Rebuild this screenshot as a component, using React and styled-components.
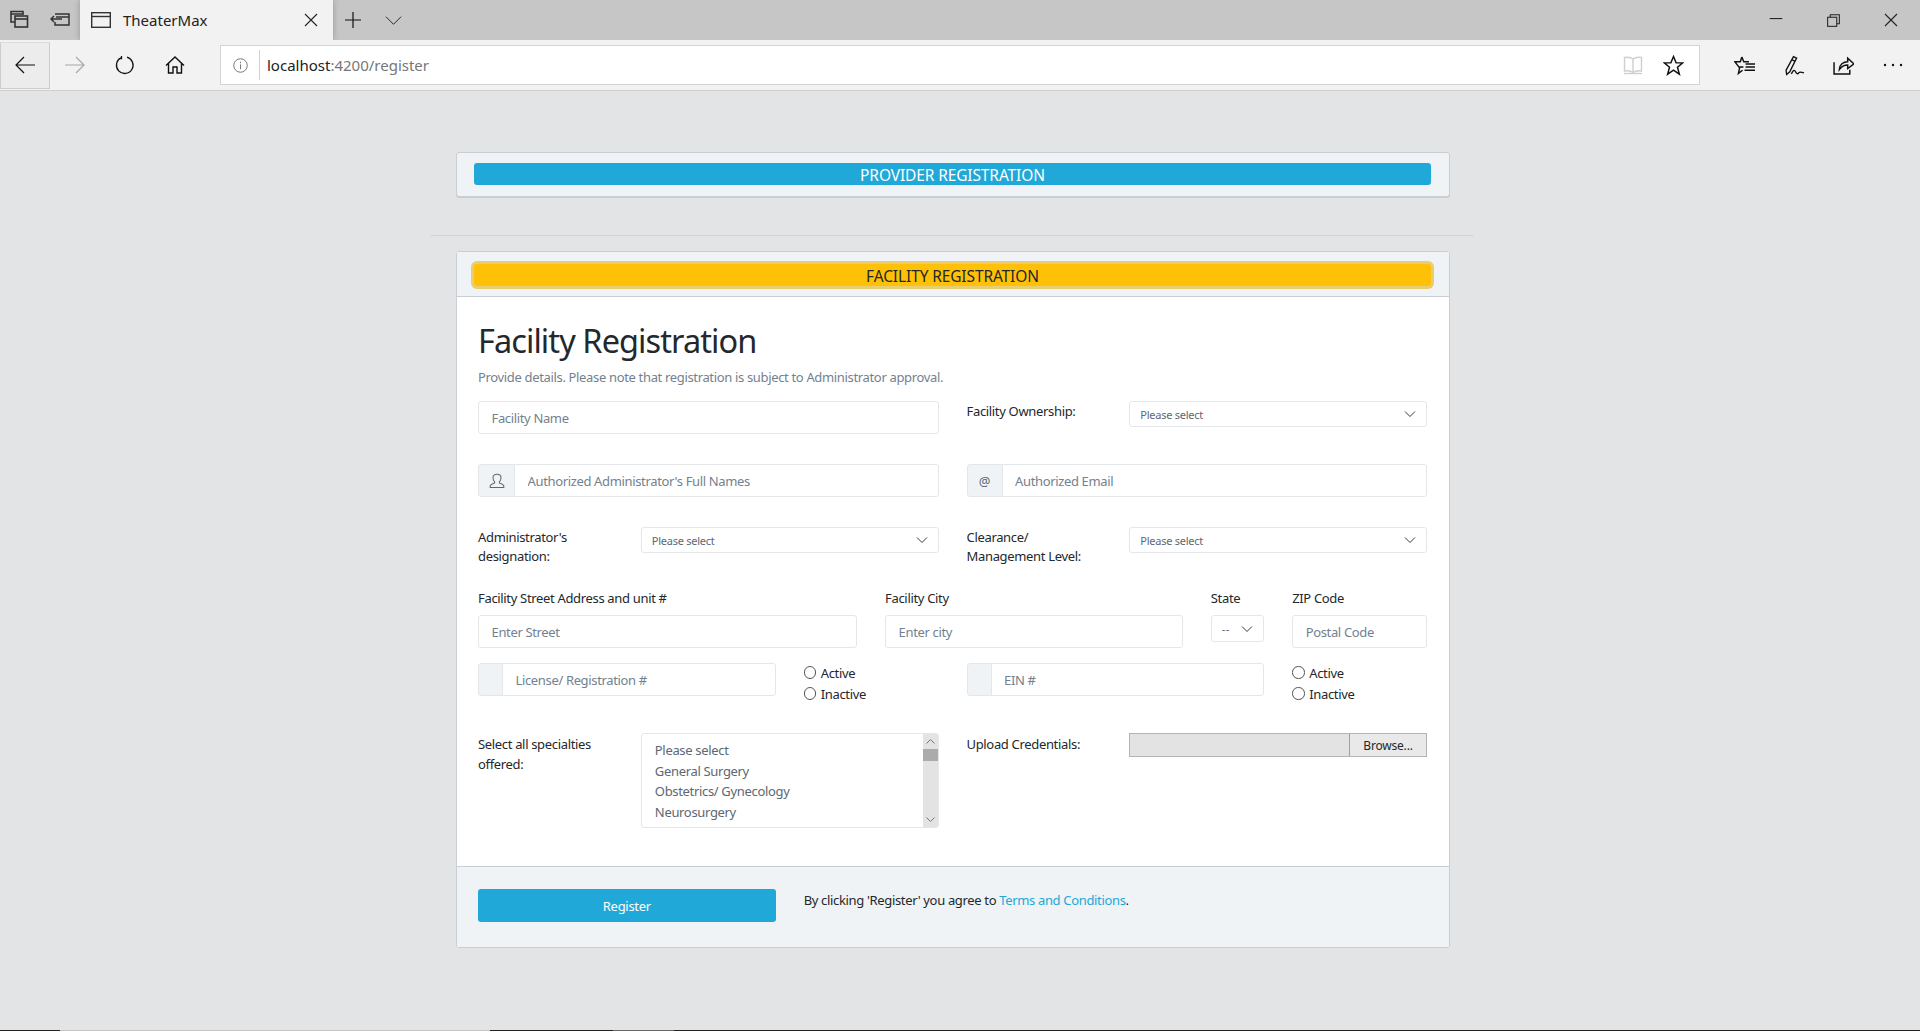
import styled, { createGlobalStyle } from "styled-components";

const FONT = '"Noto Sans", "Open Sans", sans-serif';
const CHEVRON =
  "url(\"data:image/svg+xml,%3Csvg xmlns='http://www.w3.org/2000/svg' width='12' height='8' viewBox='0 0 12 8'%3E%3Cpath d='M1 1.5l5 5 5-5' fill='none' stroke='%23343a40' stroke-width='1'/%3E%3C/svg%3E\")";

const GlobalStyle = createGlobalStyle`
  html, body {
    margin: 0;
    padding: 0;
    background: #e3e4e6;
  }
  * {
    box-sizing: border-box;
  }
  #root {
    height: 1031px;
    overflow: hidden;
  }
`;

const Page = styled.div`
  height: 1031px;
  display: flex;
  flex-direction: column;
  font-family: ${FONT};
  font-size: 13px;
  color: #23282c;
`;

/* browser chrome */
const TabStrip = styled.div`
  height: 40px;
  flex: none;
  display: flex;
  align-items: center;
  background: #c6c6c6;
  color: #111;
`;

const StripButton = styled.div`
  width: 40px;
  height: 40px;
  flex: none;
  display: flex;
  align-items: center;
  justify-content: center;
`;

const Tab = styled.div`
  width: 253px;
  height: 40px;
  flex: none;
  display: flex;
  align-items: center;
  background: #f2f2f2;
  padding-left: 11px;
  box-shadow: 0 0 6px rgba(0, 0, 0, 0.25);
`;

const TabTitle = styled.span`
  flex: 1;
  margin-left: 12px;
  font-size: 15px;
  color: #222;
`;

const TabClose = styled.div`
  width: 44px;
  display: flex;
  justify-content: center;
`;

const Spacer = styled.div`
  flex: 1;
`;

const WindowButton = styled(StripButton)`
  width: 57.5px;
`;

const NavBar = styled.div`
  height: 51px;
  flex: none;
  display: flex;
  align-items: center;
  background: #f2f2f2;
  border-bottom: 1px solid #cfcfcf;
`;

const NavButton = styled.div`
  width: 50px;
  height: 47px;
  flex: none;
  display: flex;
  align-items: center;
  justify-content: center;
  ${(p) =>
    p.$pressed &&
    "background: #ececec; border: 1px solid #cdcdcd; border-top-color: #dcdcdc;"}
`;

const HubButton = styled(NavButton)`
  width: 49.5px;
`;

const AddressBar = styled.div`
  width: 1480px;
  height: 40px;
  flex: none;
  margin: 0 20px;
  padding-right: 5px;
  display: flex;
  align-items: center;
  background: #fff;
  border: 1px solid #d4d4d4;
`;

const InfoSlot = styled.div`
  width: 39px;
  height: 30px;
  flex: none;
  display: flex;
  align-items: center;
  justify-content: center;
  border-right: 1px solid #d0d0d0;
`;

const Url = styled.div`
  flex: 1;
  padding-left: 7px;
  font-size: 15px;
  color: #777;

  b {
    font-weight: 400;
    color: #222;
  }
`;

const AddressIcon = styled.div`
  width: 41px;
  display: flex;
  justify-content: center;
`;

/* page content */
const Main = styled.main`
  flex: 1;
  width: 1042px;
  margin-left: 431px;
  padding: 61px 25px 0;
`;

const Card = styled.section`
  width: 994px;
  background: #fff;
  border: 1px solid #c8ced3;
  border-radius: 3px;
`;

const TopCard = styled(Card)`
  height: 45px;
  background: #f0f3f5;
  padding: 10px 18px 10px 17px;
  box-shadow: 0 1px 0 #c8ced3;
`;

const Divider = styled.hr`
  margin: 38px -25px 15px;
  border: 0;
  border-top: 1px solid #cfd2d6;
`;

const CardHeader = styled.header`
  height: 45px;
  padding: 12px 18px 0 17px;
  background: #f0f3f5;
  border-bottom: 1px solid #c8ced3;
`;

const Banner = styled.button`
  display: block;
  width: 100%;
  height: 22px;
  padding: ${(p) => (p.$active ? "1px 0 0" : "2px 0 0")};
  border: 0;
  border-radius: 3px;
  font-family: ${FONT};
  font-size: 15.5px;
  line-height: 20px;
  letter-spacing: -0.12px;
  text-align: center;
  color: ${(p) => (p.$active ? "#23282c" : "#fff")};
  background: ${(p) => (p.$active ? "#ffc107" : "#20a8d8")};
  box-shadow: ${(p) => (p.$active ? "0 0 0 3px #eacd70" : "none")};
`;

const CardBody = styled.div`
  padding: 23px 22px 38px 21px;
`;

const Title = styled.h1`
  margin: 0;
  font-size: 32.5px;
  line-height: 42px;
  font-weight: 400;
  letter-spacing: -0.92px;
  color: #23282c;
`;

const Lead = styled.p`
  margin: 6px 0 14px;
  line-height: 19px;
  font-size: 13px;
  letter-spacing: -0.34px;
  color: #73818f;
`;

const Row = styled.div`
  display: grid;
  grid-template-columns: repeat(12, 1fr);
  column-gap: 28px;
  margin-bottom: ${(p) => p.$gap ?? 30}px;
`;

const Col = styled.div`
  grid-column: span ${(p) => p.$span};
  min-width: 0;
`;

const Label = styled.label`
  display: block;
  font-size: 13px;
  line-height: 19px;
  letter-spacing: -0.33px;
  color: #23282c;
`;

const TopLabel = styled(Label)`
  margin-bottom: 7px;
`;

const RowLabel = styled(Label)`
  padding-top: 1px;
`;

const TallLabel = styled(RowLabel)`
  line-height: 20px;
`;

const Input = styled.input`
  display: block;
  width: 100%;
  height: 33px;
  padding: 0 12.5px;
  background: #fff;
  border: 1px solid #e4e7ea;
  border-radius: 3px;
  font-family: ${FONT};
  font-size: 13px;
  letter-spacing: -0.35px;
  outline: none;

  &::placeholder {
    color: #73818f;
    opacity: 1;
  }
`;

const Group = styled.div`
  display: flex;
  height: 33px;
`;

const Addon = styled.span`
  width: ${(p) => p.$w}px;
  flex: none;
  display: flex;
  align-items: center;
  justify-content: center;
  background: #f0f3f5;
  border: 1px solid #e4e7ea;
  border-radius: 3px 0 0 3px;
  font-size: 13px;
  color: #5c6873;
`;

const GroupInput = styled(Input)`
  flex: 1;
  min-width: 0;
  margin-left: -1px;
  border-radius: 0 3px 3px 0;
`;

const Select = styled.select`
  display: block;
  width: 100%;
  height: 26px;
  padding: 0 24px 0 10px;
  appearance: none;
  background: #fff ${CHEVRON} no-repeat right 10px center;
  border: 1px solid #e4e7ea;
  border-radius: 3px;
  font-family: ${FONT};
  font-size: 11px;
  letter-spacing: -0.25px;
  color: #5c6873;
  outline: none;
`;

const StateSelect = styled(Select)`
  height: 27px;
  letter-spacing: 0.5px;
`;

const RadioStack = styled.div`
  display: flex;
  flex-direction: column;
  gap: 2px;
`;

const RadioLabel = styled.label`
  display: flex;
  align-items: center;
  height: 19px;
  font-size: 13px;
  letter-spacing: -0.33px;
`;

const Radio = styled.input`
  appearance: none;
  width: 12.5px;
  height: 12.5px;
  margin: 0 4.5px 0 0;
  border: 1px solid #555;
  border-radius: 50%;
  background: #fff;
`;

const ListBox = styled.div`
  display: flex;
  height: 95px;
  background: #fff;
  border: 1px solid #e4e7ea;
  border-radius: 3px;
  overflow: hidden;
`;

const ListItems = styled.ul`
  flex: 1;
  margin: 0;
  padding: 6px 13px;
  list-style: none;
  font-size: 13px;
  line-height: 20.6px;
  letter-spacing: -0.33px;
  color: #5c6873;
`;

const ScrollBar = styled.div`
  position: relative;
  width: 15px;
  flex: none;
  display: flex;
  flex-direction: column;
  justify-content: space-between;
  align-items: center;
  padding: 5px 0;
  background: #e3e3e3;
`;

const ScrollThumb = styled.div`
  position: absolute;
  top: 15px;
  left: 0;
  right: 0;
  height: 12px;
  background: #ababab;
`;

const FileField = styled.div`
  display: flex;
  height: 24px;
  background: #e3e3e3;
  border: 1px solid #b4b4b4;
`;

const FileName = styled.div`
  flex: 1;
`;

const Browse = styled.button`
  width: 77px;
  flex: none;
  padding: 0;
  background: #e9e9e9;
  border: 0;
  border-left: 1px solid #a0a0a0;
  font-family: ${FONT};
  font-size: 12px;
  letter-spacing: -0.2px;
  color: #23282c;
`;

const CardFooter = styled.footer`
  height: 81px;
  padding: 22px 22px 0 21px;
  background: #f0f3f5;
  border-top: 1px solid #c8ced3;
  border-radius: 0 0 3px 3px;
`;

const RegisterButton = styled.button`
  display: block;
  width: 100%;
  height: 33px;
  padding: 0;
  border: 0;
  border-radius: 3px;
  background: #20a8d8;
  font-family: ${FONT};
  font-size: 13px;
  letter-spacing: -0.3px;
  color: #fff;
`;

const Agreement = styled.p`
  margin: 0;
  padding-top: 2px;
  line-height: 19px;
  font-size: 13px;
  letter-spacing: -0.34px;
  color: #23282c;

  a {
    color: #20a8d8;
    text-decoration: none;
  }
`;

const BottomStrip = styled.div`
  height: 1px;
  flex: none;
  display: flex;
  background: #222;
`;

const StripPiece = styled.div`
  width: ${(p) => p.$w}px;
  background: ${(p) => p.$color};
`;

/* icons */
const Glyph = ({ size = 20, color = "#111", width = 1.2, children }) => (
  <svg width={size} height={size} viewBox="0 0 20 20" fill="none" stroke={color} strokeWidth={width}>
    {children}
  </svg>
);

const TabsAsideIcon = () => (
  <Glyph width={1.6} color="#333">
    <path d="M1 6V1.5h12V5M1 4h12M1 6v6h4" />
    <rect x="5" y="6" width="12.5" height="11" />
    <path d="M5 9h12.5" />
  </Glyph>
);
const SetAsideIcon = () => (
  <Glyph width={1.5} color="#333">
    <path d="M5 4h14v11H5v-3M1 9h11M4 6L1 9l3 3" />
    <path d="M6 7h13" />
  </Glyph>
);
const PageIcon = () => (
  <Glyph color="#333" width={1.4}>
    <rect x="0.7" y="2.7" width="18.6" height="14.6" />
    <path d="M1 6.5h18" />
  </Glyph>
);
const CrossIcon = ({ size = 14 }) => (
  <svg width={size} height={size} viewBox="0 0 14 14" fill="none" stroke="#222" strokeWidth="1.1">
    <path d="M1 1l12 12M13 1L1 13" />
  </svg>
);
const PlusIcon = () => (
  <Glyph width={1.2}>
    <path d="M10 2v16M2 10h16" />
  </Glyph>
);
const DownIcon = () => (
  <Glyph size={19} width={1} color="#222">
    <path d="M2 6l8 8 8-8" />
  </Glyph>
);
const MinimizeIcon = () => (
  <Glyph size={14} width={1.4}>
    <path d="M1 8h18" />
  </Glyph>
);
const RestoreIcon = () => (
  <Glyph size={13} width={1.6} color="#222">
    <rect x="1" y="5" width="14" height="14" />
    <path d="M5 5V1h14v14h-4" />
  </Glyph>
);
const BackIcon = ({ color = "#111", flip }) => (
  <svg width="20" height="18" viewBox="0 0 20 18" fill="none" stroke={color} strokeWidth="1.2">
    <path d={flip ? "M0 9h19M11 1l8 8-8 8" : "M20 9H1M9 1L1 9l8 8"} />
  </svg>
);
const RefreshIcon = () => (
  <Glyph size={20} width={1.3}>
    <path d="M12 2.2A8.3 8.3 0 1 1 6 2.8M6.5 1v2.6H3.6" />
  </Glyph>
);
const HomeIcon = () => (
  <Glyph size={20} width={1.4}>
    <path d="M1 10.5L10 2l9 8.5M3.5 8.500V18h4.500v-6h4v6h4.500V8.500" />
  </Glyph>
);
const InfoIcon = () => (
  <Glyph size={15} color="#777" width={1.3}>
    <circle cx="10" cy="10" r="9" />
    <path d="M10 8.5v6.5M10 5v2" />
  </Glyph>
);
const BookIcon = () => (
  <Glyph color="#cfcfcf" width={1.4}>
    <path d="M10 4C8 2.5 4 2 1.5 2.5V16c3-.5 6.5 0 8.5 1.5M10 4c2-1.5 6-2 8.5-1.5V16c-3-.5-6.5 0-8.5 1.5M10 4v13.5" />
    <path d="M1 18.5h18" />
  </Glyph>
);
const StarIcon = () => (
  <Glyph size={21} width={1.4}>
    <path d="M10 1.5l2.5 6h6.3l-5 4.2 1.8 6.6-5.6-3.8-5.6 3.8 1.8-6.6-5-4.2h6.3z" />
  </Glyph>
);
const FavoritesIcon = () => (
  <Glyph size={21} width={1.4}>
    <path d="M7.5 2l1.8 4.5h5M9 11.5H4.7l-3.7-5h5L7.500 2M5.500 11.500l-1.300 6 4-3" />
    <path d="M11 8.500h9M11 11.500h9M10 14.500h10" />
  </Glyph>
);
const PenIcon = () => (
  <Glyph size={21} width={1.3}>
    <path d="M9 1.500l3 1.500-6.500 13-3 2.500-.500-4zM7.500 4.500l3 1.500" />
    <path d="M7 18c2-4 3-4 4-2s2 2.500 3 1 2-1 5 0" />
  </Glyph>
);
const ShareIcon = () => (
  <Glyph size={21} width={1.4}>
    <path d="M1 7v11h15v-4M6 14c0-5 4-7.500 8-7.500V3l6 5.500L14 13V9.500c-3 0-6 1.500-8 4.500z" />
  </Glyph>
);
const MoreIcon = () => (
  <svg width="20" height="4" viewBox="0 0 20 4" fill="#111">
    <circle cx="2" cy="2" r="1.200" />
    <circle cx="10" cy="2" r="1.200" />
    <circle cx="18" cy="2" r="1.200" />
  </svg>
);
const UserIcon = () => (
  <Glyph size={16} color="#5c6873" width={1.300}>
    <path d="M7 12.500V11C5.500 10 5 8 5 6c0-3 2-4.500 5-4.500S15 3 15 6c0 2-.5 4-2 5v1.500c2 .8 4.500 1.500 5.500 3.500v2H1.500v-2c1-2 3.500-2.700 5.500-3.500z" />
  </Glyph>
);
const ScrollArrow = ({ up }) => (
  <svg width="9" height="5" viewBox="0 0 9 5" fill="none" stroke="#777" strokeWidth="1">
    <path d={up ? "M.5 4.500l4-4 4 4" : "M.5 .5l4 4 4-4"} />
  </svg>
);

function StatusRadios({ name }) {
  return (
    <RadioStack>
      <RadioLabel>
        <Radio type="radio" name={name} />
        Active
      </RadioLabel>
      <RadioLabel>
        <Radio type="radio" name={name} />
        Inactive
      </RadioLabel>
    </RadioStack>
  );
}

function PleaseSelect() {
  return (
    <Select defaultValue="">
      <option value="">Please select</option>
    </Select>
  );
}

const SPECIALTIES = ["Please select", "General Surgery", "Obstetrics/ Gynecology", "Neurosurgery"];

export default function App() {
  return (
    <Page>
      <GlobalStyle />
      <TabStrip>
        <StripButton>
          <TabsAsideIcon />
        </StripButton>
        <StripButton>
          <SetAsideIcon />
        </StripButton>
        <Tab>
          <PageIcon />
          <TabTitle>TheaterMax</TabTitle>
          <TabClose>
            <CrossIcon />
          </TabClose>
        </Tab>
        <StripButton>
          <PlusIcon />
        </StripButton>
        <StripButton>
          <DownIcon />
        </StripButton>
        <Spacer />
        <WindowButton>
          <MinimizeIcon />
        </WindowButton>
        <WindowButton>
          <RestoreIcon />
        </WindowButton>
        <WindowButton>
          <CrossIcon />
        </WindowButton>
      </TabStrip>
      <NavBar>
        <NavButton $pressed>
          <BackIcon />
        </NavButton>
        <NavButton>
          <BackIcon flip color="#a8a8a8" />
        </NavButton>
        <NavButton>
          <RefreshIcon />
        </NavButton>
        <NavButton>
          <HomeIcon />
        </NavButton>
        <AddressBar>
          <InfoSlot>
            <InfoIcon />
          </InfoSlot>
          <Url>
            <b>localhost</b>:4200/register
          </Url>
          <AddressIcon>
            <BookIcon />
          </AddressIcon>
          <AddressIcon>
            <StarIcon />
          </AddressIcon>
        </AddressBar>
        <HubButton>
          <FavoritesIcon />
        </HubButton>
        <HubButton>
          <PenIcon />
        </HubButton>
        <HubButton>
          <ShareIcon />
        </HubButton>
        <HubButton>
          <MoreIcon />
        </HubButton>
      </NavBar>

      <Main>
        <TopCard>
          <Banner>PROVIDER REGISTRATION</Banner>
        </TopCard>
        <Divider />
        <Card>
          <CardHeader>
            <Banner $active>FACILITY REGISTRATION</Banner>
          </CardHeader>
          <CardBody>
            <Title>Facility Registration</Title>
            <Lead>Provide details. Please note that registration is subject to Administrator approval.</Lead>

            <Row>
              <Col $span={6}>
                <Input placeholder="Facility Name" />
              </Col>
              <Col $span={2}>
                <RowLabel>Facility Ownership:</RowLabel>
              </Col>
              <Col $span={4}>
                <PleaseSelect />
              </Col>
            </Row>

            <Row>
              <Col $span={6}>
                <Group>
                  <Addon $w={37}>
                    <UserIcon />
                  </Addon>
                  <GroupInput placeholder="Authorized Administrator's Full Names" />
                </Group>
              </Col>
              <Col $span={6}>
                <Group>
                  <Addon $w={36}>@</Addon>
                  <GroupInput placeholder="Authorized Email" />
                </Group>
              </Col>
            </Row>

            <Row $gap={23}>
              <Col $span={2}>
                <RowLabel>
                  Administrator's
                  <br />
                  designation:
                </RowLabel>
              </Col>
              <Col $span={4}>
                <PleaseSelect />
              </Col>
              <Col $span={2}>
                <RowLabel>
                  Clearance/
                  <br />
                  Management Level:
                </RowLabel>
              </Col>
              <Col $span={4}>
                <PleaseSelect />
              </Col>
            </Row>

            <Row $gap={15}>
              <Col $span={5}>
                <TopLabel>Facility Street Address and unit #</TopLabel>
                <Input placeholder="Enter Street" />
              </Col>
              <Col $span={4}>
                <TopLabel>Facility City</TopLabel>
                <Input placeholder="Enter city" />
              </Col>
              <Col $span={1}>
                <TopLabel>State</TopLabel>
                <StateSelect defaultValue="">
                  <option value="">--</option>
                </StateSelect>
              </Col>
              <Col $span={2}>
                <TopLabel>ZIP Code</TopLabel>
                <Input placeholder="Postal Code" />
              </Col>
            </Row>

            <Row $gap={30}>
              <Col $span={4}>
                <Group>
                  <Addon $w={25} />
                  <GroupInput placeholder="License/ Registration #" />
                </Group>
              </Col>
              <Col $span={2}>
                <StatusRadios name="license" />
              </Col>
              <Col $span={4}>
                <Group>
                  <Addon $w={25} />
                  <GroupInput placeholder="EIN #" />
                </Group>
              </Col>
              <Col $span={2}>
                <StatusRadios name="ein" />
              </Col>
            </Row>

            <Row $gap={0}>
              <Col $span={2}>
                <TallLabel>
                  Select all specialties
                  <br />
                  offered:
                </TallLabel>
              </Col>
              <Col $span={4}>
                <ListBox>
                  <ListItems>
                    {SPECIALTIES.map((item) => (
                      <li key={item}>{item}</li>
                    ))}
                  </ListItems>
                  <ScrollBar>
                    <ScrollArrow up />
                    <ScrollThumb />
                    <ScrollArrow />
                  </ScrollBar>
                </ListBox>
              </Col>
              <Col $span={2}>
                <TallLabel>Upload Credentials:</TallLabel>
              </Col>
              <Col $span={4}>
                <FileField>
                  <FileName />
                  <Browse>Browse...</Browse>
                </FileField>
              </Col>
            </Row>
          </CardBody>
          <CardFooter>
            <Row $gap={0}>
              <Col $span={4}>
                <RegisterButton>Register</RegisterButton>
              </Col>
              <Col $span={8}>
                <Agreement>
                  By clicking 'Register' you agree to <a href="#terms">Terms and Conditions</a>.
                </Agreement>
              </Col>
            </Row>
          </CardFooter>
        </Card>
      </Main>
      <BottomStrip>
        <StripPiece $w={60} $color="#222" />
        <StripPiece $w={430} $color="#c4c4c4" />
        <StripPiece $w={123} $color="#222" />
        <StripPiece $w={61} $color="#666" />
      </BottomStrip>
    </Page>
  );
}
